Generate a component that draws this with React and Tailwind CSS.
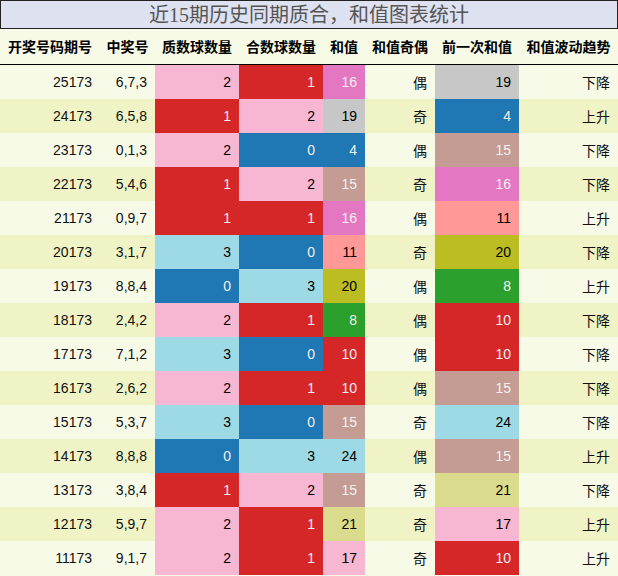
import React from "react";

const C = {
  r: "bg-[#d62728] text-[#f1f1f1]",
  p: "bg-[#f7b6d2] text-black",
  b: "bg-[#1f77b4] text-[#f1f1f1]",
  lb: "bg-[#9edae5] text-black",
  g: "bg-[#c7c7c7] text-black",
  m: "bg-[#e377c2] text-[#f1f1f1]",
  br: "bg-[#c49c94] text-[#f1f1f1]",
  s: "bg-[#ff9896] text-black",
  o: "bg-[#bcbd22] text-black",
  gr: "bg-[#2ca02c] text-[#f1f1f1]",
  k: "bg-[#dbdb8d] text-black",
};

const rows = [
  ["25173", "6,7,3", [2, "p"], [1, "r"], [16, "m"], "偶", [19, "g"], "下降"],
  ["24173", "6,5,8", [1, "r"], [2, "p"], [19, "g"], "奇", [4, "b"], "上升"],
  ["23173", "0,1,3", [2, "p"], [0, "b"], [4, "b"], "偶", [15, "br"], "下降"],
  ["22173", "5,4,6", [1, "r"], [2, "p"], [15, "br"], "奇", [16, "m"], "下降"],
  ["21173", "0,9,7", [1, "r"], [1, "r"], [16, "m"], "偶", [11, "s"], "上升"],
  ["20173", "3,1,7", [3, "lb"], [0, "b"], [11, "s"], "奇", [20, "o"], "下降"],
  ["19173", "8,8,4", [0, "b"], [3, "lb"], [20, "o"], "偶", [8, "gr"], "上升"],
  ["18173", "2,4,2", [2, "p"], [1, "r"], [8, "gr"], "偶", [10, "r"], "下降"],
  ["17173", "7,1,2", [3, "lb"], [0, "b"], [10, "r"], "偶", [10, "r"], "下降"],
  ["16173", "2,6,2", [2, "p"], [1, "r"], [10, "r"], "偶", [15, "br"], "下降"],
  ["15173", "5,3,7", [3, "lb"], [0, "b"], [15, "br"], "奇", [24, "lb"], "下降"],
  ["14173", "8,8,8", [0, "b"], [3, "lb"], [24, "lb"], "偶", [15, "br"], "上升"],
  ["13173", "3,8,4", [1, "r"], [2, "p"], [15, "br"], "奇", [21, "k"], "下降"],
  ["12173", "5,9,7", [2, "p"], [1, "r"], [21, "k"], "奇", [17, "p"], "上升"],
  ["11173", "9,1,7", [2, "p"], [1, "r"], [17, "p"], "奇", [10, "r"], "上升"],
];

const headers = ["开奖号码期号", "中奖号", "质数球数量", "合数球数量", "和值", "和值奇偶", "前一次和值", "和值波动趋势"];

const grid = "grid grid-cols-[100px_55px_84px_84px_42px_70px_84px_99px]";
const cell = "flex items-center justify-end pr-2 h-[34px]";

export default function App() {
  return (
    <div className="w-[618px] h-[576px] bg-[#f8fae8] overflow-hidden" style={{ fontFamily: '"Liberation Sans", "Noto Sans CJK SC", sans-serif' }}>
      <div className="h-[29px] border border-[#222] bg-[#dde1f0] flex items-center justify-center text-[20px] text-[#555] leading-none" style={{ fontFamily: '"Liberation Serif", "Noto Sans CJK SC", serif' }}>
        近15期历史同期质合，和值图表统计
      </div>
      <div className={`${grid} h-[36px] border-b border-black bg-[#f8fae8]`}>
        {headers.map((h) => (
          <div key={h} className="flex items-center justify-center text-[14px] font-bold text-black" style={{ fontFamily: '"Noto Sans CJK SC", sans-serif' }}>
            {h}
          </div>
        ))}
      </div>
      {rows.map((r, i) => (
        <div key={r[0]} className={`${grid} text-[14px] text-[#111] ${i % 2 === 0 ? "bg-[#f8fae8]" : "bg-[#eff3c5]"}`}>
          <div className={cell}>{r[0]}</div>
          <div className={cell}>{r[1]}</div>
          <div className={`${cell} ${C[r[2][1]]}`}>{r[2][0]}</div>
          <div className={`${cell} ${C[r[3][1]]}`}>{r[3][0]}</div>
          <div className={`${cell} ${C[r[4][1]]}`}>{r[4][0]}</div>
          <div className={cell} style={{ fontFamily: '"Noto Sans CJK SC", sans-serif' }}>{r[5]}</div>
          <div className={`${cell} ${C[r[6][1]]}`}>{r[6][0]}</div>
          <div className={cell} style={{ fontFamily: '"Noto Sans CJK SC", sans-serif' }}>{r[7]}</div>
        </div>
      ))}
    </div>
  );
}
